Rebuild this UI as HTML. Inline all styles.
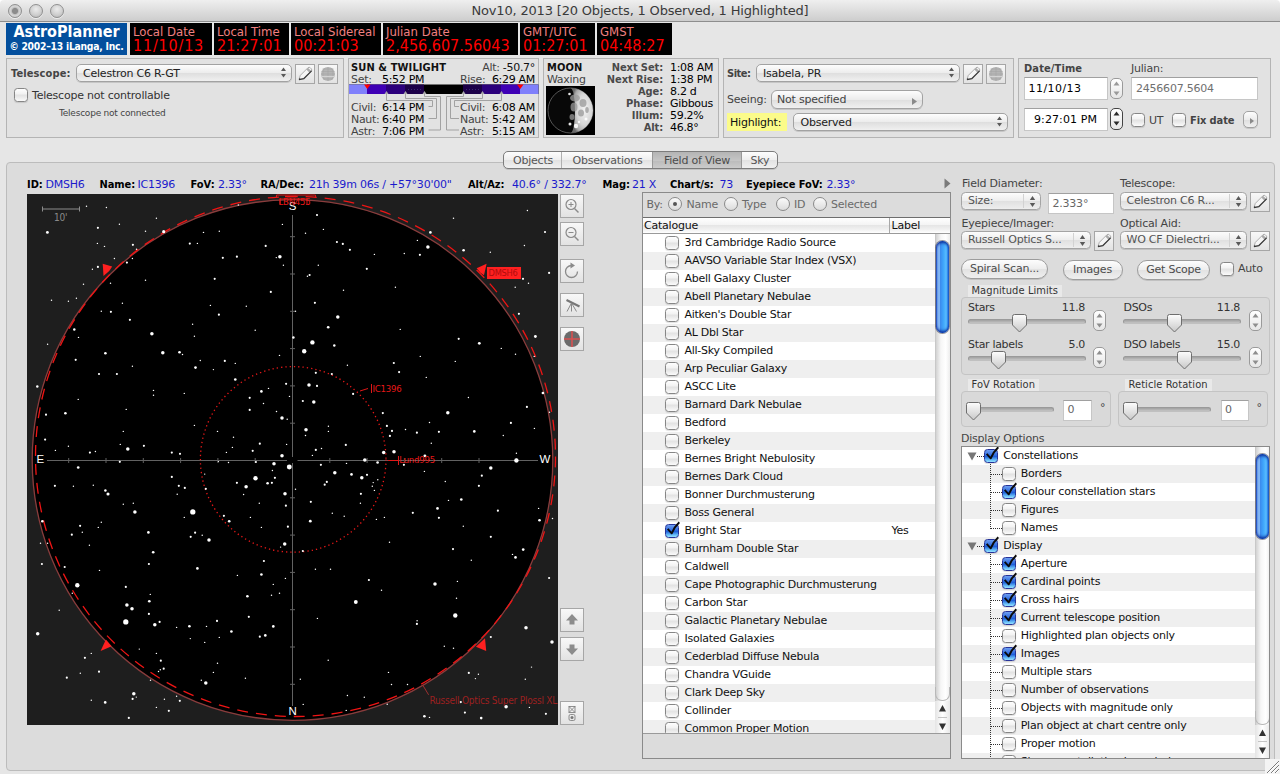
<!DOCTYPE html>
<html><head><meta charset="utf-8"><title>AstroPlanner</title>
<style>
*{box-sizing:border-box;margin:0;padding:0}
html,body{width:1280px;height:774px;overflow:hidden;background:#e6e6e6}
body{font-family:"DejaVu Sans","Liberation Sans",sans-serif;font-size:11px;letter-spacing:-.22px;color:#222;position:relative;-webkit-font-smoothing:antialiased}
.a{position:absolute;white-space:nowrap}
.b{font-family:"DejaVu Sans Condensed","DejaVu Sans","Liberation Sans",sans-serif;font-stretch:condensed;font-weight:bold;letter-spacing:.12px}
.cd{font-family:"DejaVu Sans Condensed","DejaVu Sans","Liberation Sans",sans-serif;font-stretch:condensed;letter-spacing:0}
.r{text-align:right}
.titlebar{left:0;top:0;width:1280px;height:22px;background:linear-gradient(#efefef,#cdcdcd);border-bottom:1px solid #8e8e8e;border-radius:4px 4px 0 0}
.title{left:0;top:3px;width:1280px;text-align:center;font-size:13px;letter-spacing:-.18px;color:#3a3a3a}
.tl{width:14px;height:14px;border-radius:50%;top:4px;background:radial-gradient(circle at 50% 35%,#ececec,#d0d0d0 55%,#b4b4b4);border:1px solid #909090;box-shadow:0 1px 0 rgba(255,255,255,.6)}
.blk{top:23px;height:32px;background:#000}
.blk .l{left:3px;top:1px;font-size:13px;color:#f08080;line-height:15px}
.blk .v{left:3px;top:13px;font-size:16px;color:#f00;line-height:19px}
.grp{border:1px solid #b4b4b4;background:#e2e2e2}
.lbl{color:#444}
.pop{height:18px;border:1px solid #a2a2a2;border-radius:5px;background:linear-gradient(#fdfdfd,#ececec 50%,#dedede 51%,#f0f0f0);box-shadow:0 1px 0 rgba(0,0,0,.12);font-size:11px;line-height:17px;padding-left:6px;color:#222}
.pop.d:after{content:"";position:absolute;right:15px;top:1px;bottom:1px;border-left:1px solid #dcdcdc}
.arr{right:4px;top:2px;width:7px;height:11px}
.sqb{width:19px;height:19px;border:1px solid #a6a6a6;background:linear-gradient(#f8f8f8,#e2e2e2)}
.chk{width:13px;height:13px;border:1px solid #868686;border-radius:3.500px;background:linear-gradient(#fefefe,#f2f2f2 42%,#e2e2e2 50%,#ececec 72%,#fbfbfb);box-shadow:0 1px 1px rgba(0,0,0,.12)}
.chk.on{background:linear-gradient(#9cc6f4,#3f83dc 50%,#2a6fd0 51%,#6fb0f2);border-color:#3a5f9e}
.fld{background:#fff;border:1px solid #c6c6c6;border-top-color:#a0a0a0;font-size:11px;line-height:16px;padding-left:5px}
.stp{width:11px;height:21px;border:1px solid #9a9a9a;border-radius:5px;background:linear-gradient(#fff,#e6e6e6)}
</style></head><body>
<div class="a" style="left:0;top:0;width:1280px;height:6px;background:#fff"></div><div class="a titlebar"></div>
<div class="a tl" style="left:8px;background:radial-gradient(circle at 50% 50%,#8c8c8c 0,#8c8c8c 2.600px,#c4c4c4 3.600px,#d8d8d8 5px,#b0b0b0)"></div><div class="a tl" style="left:29px"></div><div class="a tl" style="left:50px"></div>
<div class="a title">Nov10, 2013 [20 Objects, 1 Observed, 1 Highlighted]</div>
<div class="a" style="left:6px;top:23px;width:121px;height:32px;background:#034f9d;color:#fff;text-align:center">
 <div class="a b" style="left:0;width:121px;top:0px;font-size:16px;line-height:18px;letter-spacing:0">AstroPlanner</div>
 <div class="a b" style="left:0;width:121px;top:17px;font-size:10.300px;letter-spacing:-.25px;line-height:13px">© 2002–13 iLanga, Inc.</div>
</div>
<div class="a blk cd" style="left:130px;width:82px"><div class="a l">Local Date</div><div class="a v" style="letter-spacing:.8px">11/10/13</div></div>
<div class="a blk cd" style="left:214px;width:75px"><div class="a l">Local Time</div><div class="a v">21:27:01</div></div>
<div class="a blk cd" style="left:291px;width:90px"><div class="a l">Local Sidereal</div><div class="a v">00:21:03</div></div>
<div class="a blk cd" style="left:383px;width:135px"><div class="a l">Julian Date</div><div class="a v">2,456,607.56043</div></div>
<div class="a blk cd" style="left:520px;width:75px"><div class="a l">GMT/UTC</div><div class="a v">01:27:01</div></div>
<div class="a blk cd" style="left:597px;width:75px"><div class="a l">GMST</div><div class="a v">04:48:27</div></div>
<!-- telescope panel -->
<div class="a grp" style="left:6px;top:58px;width:338px;height:80px"></div>
<div class="a b lbl" style="left:11px;top:67px;font-size:11px;line-height:14px">Telescope:</div>
<div class="a pop" style="left:76px;top:64px;width:216px">Celestron C6 R-GT<svg class="a arr" viewBox="0 0 7 11"><path d="M3.5 0.5L6 4H1zM3.5 10.5L6 7H1z" fill="#5a5a5a"/></svg></div>
<div class="a sqb" style="left:295px;top:64px;width:20px;height:20px"><svg class="a" style="left:-1px;top:-1px" width="20" height="20" viewBox="0 0 20 20"><path d="M4 15.600L5.300 11.400L12.900 3.800a1.700 1.700 0 0 1 2.400 0l1 1a1.700 1.700 0 0 1 0 2.400L8.700 14.700z" fill="#f6f6f6" stroke="#9c9c9c" stroke-width=".8"/><path d="M11.300 5.400l3.300 3.300 1.700-1.700-3.300-3.300z" fill="#ababab"/><path d="M4 15.600L8.700 14.700L16.600 6.900" stroke="#3c3c3c" stroke-width="1.300" fill="none" stroke-linejoin="round"/><path d="M4 15.600l1.700-.300-1.200-1.300z" fill="#333"/></svg></div>
<div class="a sqb" style="left:318px;top:64px;width:20px;height:20px"><svg class="a" style="left:-1px;top:-1px" width="20" height="20" viewBox="0 0 20 20"><circle cx="10" cy="10" r="7" fill="#b6b6b6"/><path d="M3.500 7.500h13M3 10h14M4.500 5h11M5 15h10M10 3v14M6.500 4c-2 4-2 8 0 12M13.500 4c2 4 2 8 0 12" stroke="#a6a6a6" stroke-width=".6" fill="none"/><path d="M3.600 12.600h12.800" stroke="#d8d8d8" stroke-width="1"/></svg></div>
<div class="a chk" style="left:14px;top:88px;width:14px;height:14px"></div>
<div class="a" style="left:32px;top:87.700px;font-size:11px;line-height:15px;color:#333">Telescope not controllable</div>
<div class="a" style="left:59px;top:106.500px;font-size:9px;line-height:12px;color:#444">Telescope not connected</div>
<!-- sun panel -->
<div class="a grp" style="left:348px;top:58px;width:191px;height:80px"></div>
<div class="a b" style="left:351px;top:61px;font-size:11px;line-height:13px;color:#111">SUN &amp; TWILIGHT</div>
<div class="a r" style="left:435px;width:100px;top:61px;font-size:11px;letter-spacing:-.3px;line-height:14px;color:#111"><span class="lbl">Alt:</span> -50.7°</div>
<div class="a lbl" style="left:351px;top:73px;font-size:11px;letter-spacing:-.3px;line-height:14px">Set:</div>
<div class="a" style="left:382px;top:73px;font-size:11px;letter-spacing:-.3px;line-height:14px;color:#000">5:52 PM</div>
<div class="a lbl" style="left:460px;top:73px;font-size:11px;letter-spacing:-.3px;line-height:14px">Rise:</div>
<div class="a r" style="left:435px;width:100px;top:73px;font-size:11px;letter-spacing:-.3px;line-height:14px;color:#000">6:29 AM</div>
<svg class="a" style="left:348px;top:84px" width="191" height="52" viewBox="348 84 191 52">
<rect x="349" y="84.5" width="189.5" height="9.5" fill="#000"/>
<rect x="349" y="84.5" width="18" height="9.5" fill="#8080fb"/><rect x="520" y="84.5" width="18.5" height="9.5" fill="#8080fb"/>
<rect x="367" y="84.5" width="19" height="9.5" fill="#3f00b5"/><rect x="501" y="84.5" width="19" height="9.5" fill="#3f00b5"/>
<rect x="386" y="84.5" width="19" height="9.5" fill="#2c007c"/><rect x="482" y="84.5" width="19" height="9.5" fill="#2c007c"/>
<rect x="405" y="84.5" width="19" height="9.5" fill="#1c0048"/><rect x="463" y="84.5" width="19" height="9.5" fill="#1c0048"/>
<path d="M408 89.500h13M466 89.500h13" stroke="#3a2a70" stroke-width="1" stroke-dasharray="1 2" fill="none"/><path d="M364 84.5h6.500l-3.250 4.500zM517 84.5h6.500l-3.250 4.500z" fill="#f00"/>
<g fill="none" stroke="#a2a2a2" stroke-width="1">
<path d="M386.5 94v6.5h46v6h-4M405.5 94v4.500h31v20h-8M424.500 94v2.500h16v33.500h-12"/>
<path d="M501.500 94v6.500h-47v6h4.500M482.500 94v4.500h-32v20h8.500M463.500 94v2.500h-17v33.500h12.500"/>
</g>
<path d="M384.500 94l2-3 2 3zM403.500 94l2-3 2 3zM422.500 94l2-3 2 3zM461.500 94l2-3 2 3zM480.500 94l2-3 2 3zM499.500 94l2-3 2 3z" fill="#a8a8a8"/>
</svg>
<div class="a lbl" style="left:351px;top:101px;font-size:11px;letter-spacing:-.3px;line-height:14px">Civil:</div><div class="a" style="left:382px;top:101px;font-size:11px;letter-spacing:-.3px;line-height:14px;color:#000">6:14 PM</div>
<div class="a lbl" style="left:351px;top:113px;font-size:11px;letter-spacing:-.3px;line-height:14px">Naut:</div><div class="a" style="left:382px;top:113px;font-size:11px;letter-spacing:-.3px;line-height:14px;color:#000">6:40 PM</div>
<div class="a lbl" style="left:351px;top:125px;font-size:11px;letter-spacing:-.3px;line-height:14px">Astr:</div><div class="a" style="left:382px;top:125px;font-size:11px;letter-spacing:-.3px;line-height:14px;color:#000">7:06 PM</div>
<div class="a lbl" style="left:460px;top:101px;font-size:11px;letter-spacing:-.3px;line-height:14px">Civil:</div><div class="a r" style="left:435px;width:100px;top:101px;font-size:11px;letter-spacing:-.3px;line-height:14px;color:#000">6:08 AM</div>
<div class="a lbl" style="left:460px;top:113px;font-size:11px;letter-spacing:-.3px;line-height:14px">Naut:</div><div class="a r" style="left:435px;width:100px;top:113px;font-size:11px;letter-spacing:-.3px;line-height:14px;color:#000">5:42 AM</div>
<div class="a lbl" style="left:460px;top:125px;font-size:11px;letter-spacing:-.3px;line-height:14px">Astr:</div><div class="a r" style="left:435px;width:100px;top:125px;font-size:11px;letter-spacing:-.3px;line-height:14px;color:#000">5:15 AM</div>
<!-- moon panel -->
<div class="a grp" style="left:543px;top:58px;width:176px;height:80px"></div>
<div class="a b" style="left:547px;top:61px;font-size:11px;line-height:13px;color:#111">MOON</div>
<div class="a lbl" style="left:547px;top:73px;font-size:11px;letter-spacing:-.3px;line-height:14px">Waxing</div>
<svg class="a" style="left:546px;top:86px" width="49" height="49" viewBox="0 0 49 49">
<defs><radialGradient id="mg" cx="62%" cy="48%" r="62%"><stop offset="0" stop-color="#f2f2f2"/><stop offset=".55" stop-color="#d6d6d6"/><stop offset=".85" stop-color="#a8a8a8"/><stop offset="1" stop-color="#6a6a6a"/></radialGradient></defs>
<rect width="49" height="49" fill="#000"/>
<circle cx="24.500" cy="24.500" r="22.500" fill="#080808" stroke="#555" stroke-width="1"/>
<path d="M24.500 2A22.500 22.500 0 0 1 24.500 47A4.500 22.500 0 0 0 24.500 2z" fill="url(#mg)"/>
<g fill="#9a9a9a" opacity=".75"><ellipse cx="29" cy="12" rx="5" ry="3.500"/><ellipse cx="37" cy="17" rx="3.500" ry="4"/><ellipse cx="28" cy="21" rx="3.500" ry="4.500"/><ellipse cx="35" cy="27" rx="3" ry="3.500"/><ellipse cx="26" cy="31" rx="2.500" ry="3"/><ellipse cx="41" cy="24" rx="1.800" ry="3"/></g>
<g fill="#fff" opacity=".9"><circle cx="30" cy="40" r="2.200"/><circle cx="40" cy="33" r="1.500"/><circle cx="24" cy="38" r="1.500"/><circle cx="33" cy="36" r="1.200"/><circle cx="23.500" cy="8" r="1.300"/></g>
</svg>
<div class="a b r" style="left:583px;width:80px;top:61px;font-size:11px;letter-spacing:-.1px;line-height:14px;color:#4a4a4a">Next Set:</div><div class="a" style="left:670px;top:61px;font-size:11px;letter-spacing:-.3px;line-height:14px;color:#000">1:08 AM</div>
<div class="a b r" style="left:583px;width:80px;top:73px;font-size:11px;letter-spacing:-.1px;line-height:14px;color:#4a4a4a">Next Rise:</div><div class="a" style="left:670px;top:73px;font-size:11px;letter-spacing:-.3px;line-height:14px;color:#000">1:38 PM</div>
<div class="a b r" style="left:583px;width:80px;top:85px;font-size:11px;letter-spacing:-.1px;line-height:14px;color:#4a4a4a">Age:</div><div class="a" style="left:670px;top:85px;font-size:11px;letter-spacing:-.3px;line-height:14px;color:#000">8.2 d</div>
<div class="a b r" style="left:583px;width:80px;top:97px;font-size:11px;letter-spacing:-.1px;line-height:14px;color:#4a4a4a">Phase:</div><div class="a" style="left:670px;top:97px;font-size:11px;letter-spacing:-.3px;line-height:14px;color:#000">Gibbous</div>
<div class="a b r" style="left:583px;width:80px;top:109px;font-size:11px;letter-spacing:-.1px;line-height:14px;color:#4a4a4a">Illum:</div><div class="a" style="left:670px;top:109px;font-size:11px;letter-spacing:-.3px;line-height:14px;color:#000">59.2%</div>
<div class="a b r" style="left:583px;width:80px;top:121px;font-size:11px;letter-spacing:-.1px;line-height:14px;color:#4a4a4a">Alt:</div><div class="a" style="left:670px;top:121px;font-size:11px;letter-spacing:-.3px;line-height:14px;color:#000">46.8°</div>
<!-- site panel -->
<div class="a grp" style="left:723px;top:58px;width:291px;height:80px"></div>
<div class="a b lbl" style="left:727px;top:67px;font-size:11px;letter-spacing:-.5px;line-height:14px">Site:</div>
<div class="a pop" style="left:756px;top:64px;width:204px">Isabela, PR<svg class="a arr" viewBox="0 0 7 11"><path d="M3.5 0.5L6 4H1zM3.5 10.5L6 7H1z" fill="#5a5a5a"/></svg></div>
<div class="a sqb" style="left:963px;top:64px;width:20px;height:20px"><svg class="a" style="left:-1px;top:-1px" width="20" height="20" viewBox="0 0 20 20"><path d="M4 15.600L5.300 11.400L12.900 3.800a1.700 1.700 0 0 1 2.400 0l1 1a1.700 1.700 0 0 1 0 2.400L8.700 14.700z" fill="#f6f6f6" stroke="#9c9c9c" stroke-width=".8"/><path d="M11.300 5.400l3.300 3.300 1.700-1.700-3.300-3.300z" fill="#ababab"/><path d="M4 15.600L8.700 14.700L16.600 6.900" stroke="#3c3c3c" stroke-width="1.300" fill="none" stroke-linejoin="round"/><path d="M4 15.600l1.700-.300-1.200-1.300z" fill="#333"/></svg></div>
<div class="a sqb" style="left:986px;top:64px;width:20px;height:20px"><svg class="a" style="left:-1px;top:-1px" width="20" height="20" viewBox="0 0 20 20"><circle cx="10" cy="10" r="7" fill="#b6b6b6"/><path d="M3.500 7.500h13M3 10h14M4.500 5h11M5 15h10M10 3v14M6.500 4c-2 4-2 8 0 12M13.500 4c2 4 2 8 0 12" stroke="#a6a6a6" stroke-width=".6" fill="none"/><path d="M3.600 12.600h12.800" stroke="#d8d8d8" stroke-width="1"/></svg></div>
<div class="a lbl" style="left:727px;top:93px;font-size:11px;line-height:14px">Seeing:</div>
<div class="a pop" style="left:771px;top:90px;width:152px;height:19px;border-radius:6px;color:#444;padding-left:5px">Not specified<svg class="a" style="right:5px;top:7px" width="5" height="7" viewBox="0 0 5 7"><path d="M0 0l5 3.500-5 3.500z" fill="#8a8a8a"/></svg></div>
<div class="a" style="left:727px;top:113px;width:60px;height:18px;background:#fbfb8a;font-size:11px;line-height:20px;padding-left:3px;color:#111">Highlight:</div>
<div class="a pop" style="left:793px;top:113px;width:215px;padding-left:6.500px">Observed<svg class="a arr" viewBox="0 0 7 11"><path d="M3.5 0.5L6 4H1zM3.5 10.5L6 7H1z" fill="#5a5a5a"/></svg></div>
<!-- date/time panel -->
<div class="a grp" style="left:1018px;top:58px;width:253px;height:80px"></div>
<div class="a b lbl" style="left:1024px;top:62px;font-size:11px;line-height:14px">Date/Time</div>
<div class="a lbl" style="left:1131px;top:62px;font-size:11px;line-height:14px">Julian:</div>
<div class="a fld" style="left:1024px;top:77px;width:84px;height:23px;line-height:21px;color:#000;letter-spacing:.45px;padding-left:3.500px">11/10/13</div>
<div class="a stp" style="left:1110px;top:78px;width:13px;height:21px"><svg class="a" style="left:2px;top:2px" width="7" height="15" viewBox="0 0 7 15"><path d="M3.500 .500L6.500 4.500H.500zM3.500 14.500L6.500 10.500H.500z" fill="#9a9a9a"/></svg></div>
<div class="a fld" style="left:1131px;top:77px;width:127px;height:23px;line-height:21px;color:#707070;padding-left:4px">2456607.5604</div>
<div class="a fld" style="left:1024px;top:108px;width:84px;height:23px;line-height:21px;color:#000;padding-left:9px;letter-spacing:.1px">9:27:01 PM</div>
<div class="a stp" style="left:1110px;top:108px;width:13px;height:22px;border:1.500px solid #444"><svg class="a" style="left:1.500px;top:2px" width="7" height="15" viewBox="0 0 7 15"><path d="M3.500 .500L6.500 4.500H.500zM3.500 14.500L6.500 10.500H.500z" fill="#2a2a2a"/></svg></div>
<div class="a chk" style="left:1131px;top:113px;width:14px;height:14px"></div>
<div class="a lbl" style="left:1149px;top:113px;font-size:11px;line-height:15px">UT</div>
<div class="a chk" style="left:1172px;top:113px;width:14px;height:14px"></div>
<div class="a b lbl" style="left:1190px;top:113px;font-size:11px;letter-spacing:-.1px;line-height:15px">Fix date</div>
<div class="a pop" style="left:1243px;top:111px;width:15px;height:17px;border-radius:5px;padding:0"><svg class="a" style="left:6px;top:6px" width="4" height="6" viewBox="0 0 4 6"><path d="M0 0l4 3-4 3z" fill="#8a8a8a"/></svg></div>
<!-- main tab panel -->
<div class="a" style="left:6px;top:161.500px;width:1269px;height:609.500px;border:1px solid #bcbcbc;border-radius:4px;background:#dcdcdc"></div>
<div class="a" style="left:503px;top:151px;width:275px;height:18px;border:1px solid #7c7c7c;border-radius:5px;background:linear-gradient(#fdfdfd,#eee 50%,#e2e2e2 51%,#f0f0f0);box-shadow:0 1px 0 rgba(0,0,0,.12);overflow:hidden;font-size:11px;color:#555">
<div class="a" style="left:149px;top:0;width:88px;height:18px;background:linear-gradient(#b4b4b4,#c6c6c6 50%,#bcbcbc 51%,#cfcfcf)"></div>
<div class="a" style="left:57px;top:0;width:1px;height:18px;background:#b0b0b0"></div>
<div class="a" style="left:148px;top:0;width:1px;height:18px;background:#999"></div>
<div class="a" style="left:237px;top:0;width:1px;height:18px;background:#999"></div>
<div class="a" style="left:0;width:58px;top:1px;text-align:center;line-height:15px">Objects</div>
<div class="a" style="left:58px;width:91px;top:1px;text-align:center;line-height:15px">Observations</div>
<div class="a" style="left:149px;width:88px;top:1px;text-align:center;line-height:15px;color:#4c4c4c">Field of View</div>
<div class="a" style="left:238px;width:36px;top:1px;text-align:center;line-height:15px">Sky</div>
</div>
<div class="a b" style="left:27px;top:178px;font-size:11px;letter-spacing:-.05px;line-height:14px;color:#000">ID:</div><div class="a" style="left:45.5px;top:178px;font-size:11px;line-height:14px;color:#1a1acc">DMSH6</div>
<div class="a b" style="left:99.5px;top:178px;font-size:11px;letter-spacing:-.05px;line-height:14px;color:#000">Name:</div><div class="a" style="left:137.5px;top:178px;font-size:11px;line-height:14px;color:#1a1acc">IC1396</div>
<div class="a b" style="left:190.5px;top:178px;font-size:11px;letter-spacing:-.05px;line-height:14px;color:#000">FoV:</div><div class="a" style="left:218px;top:178px;font-size:11px;line-height:14px;color:#1a1acc">2.33°</div>
<div class="a b" style="left:260.5px;top:178px;font-size:11px;letter-spacing:-.05px;line-height:14px;color:#000">RA/Dec:</div><div class="a" style="left:309px;top:178px;font-size:11px;line-height:14px;color:#1a1acc">21h 39m 06s / +57°30'00"</div>
<div class="a b" style="left:468px;top:178px;font-size:11px;letter-spacing:-.05px;line-height:14px;color:#000">Alt/Az:</div><div class="a" style="left:512px;top:178px;font-size:11px;line-height:14px;color:#1a1acc">40.6° / 332.7°</div>
<div class="a b" style="left:602.5px;top:178px;font-size:11px;letter-spacing:-.05px;line-height:14px;color:#000">Mag:</div><div class="a" style="left:632px;top:178px;font-size:11px;line-height:14px;color:#1a1acc">21 X</div>
<div class="a b" style="left:670px;top:178px;font-size:11px;letter-spacing:-.05px;line-height:14px;color:#000">Chart/s:</div><div class="a" style="left:719.5px;top:178px;font-size:11px;line-height:14px;color:#1a1acc">73</div>
<div class="a b" style="left:746px;top:178px;font-size:11px;letter-spacing:-.05px;line-height:14px;color:#000">Eyepiece FoV:</div><div class="a" style="left:826.5px;top:178px;font-size:11px;line-height:14px;color:#1a1acc">2.33°</div>
<svg class="a" style="left:944px;top:178px" width="7" height="11" viewBox="0 0 7 11"><path d="M0.500 0.500l6 5-6 5z" fill="#7a7a7a"/></svg>
<svg class="a" style="left:27px;top:194px" width="531" height="531" viewBox="27 194 531 531" font-family="'Liberation Sans',sans-serif">
<rect x="27" y="194" width="531" height="531" fill="#1e1e1e"/>
<circle cx="292.500" cy="460" r="260" fill="#000"/>
<g stroke="#626262" stroke-width="1" fill="none"><path d="M292.500 215v242M292.500 463v243M47 460.500h240M297.500 460.500h240.500"/>
<path d="M68.7 458v5M290 236.7h5M106.0 458v5M290 274.0h5M143.3 458v5M290 311.3h5M180.6 458v5M290 348.6h5M217.9 458v5M290 385.9h5M255.2 458v5M290 423.2h5M329.8 458v5M290 497.8h5M367.1 458v5M290 535.1h5M404.4 458v5M290 572.4h5M441.7 458v5M290 609.7h5M479.0 458v5M290 647.0h5M516.3 458v5M290 684.3h5"/></g>
<circle cx="293.200" cy="459.400" r="92.800" fill="none" stroke="#e81818" stroke-width="1.300" stroke-dasharray="1.300 3.030"/>
<circle cx="292.500" cy="460" r="260.300" fill="none" stroke="#8a3c3c" stroke-width="1.300"/>
<circle cx="295.500" cy="456.500" r="260" fill="none" stroke="#f01414" stroke-width="1.300" stroke-dasharray="11 8"/>
<path d="M42.500 206.500v5M79.500 206.500v5M42.500 209h37" stroke="#8c8c8c" stroke-width="1" fill="none"/>
<text x="54" y="221" font-size="10" fill="#8a8a8a" font-family="DejaVu Sans Condensed,DejaVu Sans,sans-serif">10'</text>
<circle cx="86.5" cy="206.3" r="0.72" fill="#fff"/>
<circle cx="106.4" cy="207.5" r="0.72" fill="#fff"/>
<circle cx="156.4" cy="218.2" r="0.72" fill="#fff"/>
<circle cx="97.9" cy="227.8" r="1.08" fill="#fff"/>
<circle cx="119.4" cy="224.2" r="0.72" fill="#fff"/>
<circle cx="47.4" cy="232.4" r="1.41" fill="#fff"/>
<circle cx="145.5" cy="231.3" r="0.72" fill="#fff"/>
<circle cx="163.7" cy="231.7" r="1.58" fill="#fff"/>
<circle cx="97.4" cy="243.4" r="0.72" fill="#fff"/>
<circle cx="104.5" cy="246.4" r="0.72" fill="#fff"/>
<circle cx="132.9" cy="244.8" r="1.08" fill="#fff"/>
<circle cx="136.5" cy="249.3" r="0.72" fill="#fff"/>
<circle cx="189.8" cy="243.6" r="1.08" fill="#fff"/>
<circle cx="197.4" cy="243.4" r="0.72" fill="#fff"/>
<circle cx="114.4" cy="258.5" r="0.72" fill="#fff"/>
<circle cx="132.4" cy="258.5" r="0.72" fill="#fff"/>
<circle cx="126.9" cy="262.6" r="1.08" fill="#fff"/>
<circle cx="97.9" cy="266.9" r="1.08" fill="#fff"/>
<circle cx="92.4" cy="269.2" r="0.72" fill="#fff"/>
<circle cx="83.5" cy="284.3" r="0.72" fill="#fff"/>
<circle cx="110.5" cy="283.2" r="0.72" fill="#fff"/>
<circle cx="145.5" cy="280.2" r="0.72" fill="#fff"/>
<circle cx="51.5" cy="300.3" r="0.72" fill="#fff"/>
<circle cx="68.4" cy="301.2" r="0.72" fill="#fff"/>
<circle cx="76.4" cy="298.3" r="0.72" fill="#fff"/>
<circle cx="122.4" cy="303.3" r="0.72" fill="#fff"/>
<circle cx="101.3" cy="311.3" r="0.72" fill="#fff"/>
<circle cx="110.9" cy="311.8" r="1.08" fill="#fff"/>
<circle cx="129.9" cy="319.8" r="1.08" fill="#fff"/>
<circle cx="192.6" cy="324.3" r="0.72" fill="#fff"/>
<circle cx="74.3" cy="329.4" r="1.23" fill="#fff"/>
<circle cx="78.5" cy="337.4" r="0.72" fill="#fff"/>
<circle cx="151.9" cy="333.7" r="1.76" fill="#fff"/>
<circle cx="194.4" cy="336.2" r="0.72" fill="#fff"/>
<circle cx="47.6" cy="344.2" r="0.72" fill="#fff"/>
<circle cx="105.4" cy="353.2" r="1.32" fill="#fff"/>
<circle cx="162.8" cy="352.7" r="1.76" fill="#fff"/>
<circle cx="179.5" cy="352.2" r="1.32" fill="#fff"/>
<circle cx="182.5" cy="354.5" r="0.72" fill="#fff"/>
<circle cx="75.7" cy="359.8" r="1.08" fill="#fff"/>
<circle cx="132.4" cy="366.2" r="0.72" fill="#fff"/>
<circle cx="195.5" cy="367.6" r="1.32" fill="#fff"/>
<circle cx="200.3" cy="360.5" r="0.72" fill="#fff"/>
<circle cx="203.5" cy="232.4" r="0.72" fill="#fff"/>
<circle cx="317.0" cy="215.0" r="1.08" fill="#fff"/>
<circle cx="282.4" cy="224.4" r="0.72" fill="#fff"/>
<circle cx="219.3" cy="231.3" r="0.72" fill="#fff"/>
<circle cx="323.4" cy="229.4" r="0.72" fill="#fff"/>
<circle cx="305.5" cy="233.3" r="0.72" fill="#fff"/>
<circle cx="265.7" cy="245.9" r="1.08" fill="#fff"/>
<circle cx="336.9" cy="242.0" r="1.08" fill="#fff"/>
<circle cx="342.8" cy="243.9" r="1.08" fill="#fff"/>
<circle cx="349.9" cy="249.8" r="1.08" fill="#fff"/>
<circle cx="374.4" cy="254.4" r="0.72" fill="#fff"/>
<circle cx="222.8" cy="257.8" r="1.08" fill="#fff"/>
<circle cx="236.9" cy="256.7" r="1.08" fill="#fff"/>
<circle cx="279.9" cy="256.7" r="1.76" fill="#fff"/>
<circle cx="276.3" cy="257.6" r="0.72" fill="#fff"/>
<circle cx="283.4" cy="265.3" r="0.72" fill="#fff"/>
<circle cx="318.3" cy="265.3" r="0.72" fill="#fff"/>
<circle cx="366.8" cy="268.8" r="1.08" fill="#fff"/>
<circle cx="309.6" cy="275.0" r="1.08" fill="#fff"/>
<circle cx="307.4" cy="276.3" r="0.72" fill="#fff"/>
<circle cx="214.7" cy="278.8" r="1.08" fill="#fff"/>
<circle cx="270.8" cy="291.9" r="1.08" fill="#fff"/>
<circle cx="343.5" cy="290.3" r="0.72" fill="#fff"/>
<circle cx="210.4" cy="305.4" r="0.72" fill="#fff"/>
<circle cx="246.3" cy="306.3" r="0.72" fill="#fff"/>
<circle cx="314.9" cy="302.8" r="1.08" fill="#fff"/>
<circle cx="295.5" cy="311.3" r="0.72" fill="#fff"/>
<circle cx="218.9" cy="314.7" r="1.08" fill="#fff"/>
<circle cx="337.8" cy="317.0" r="1.76" fill="#fff"/>
<circle cx="328.2" cy="327.3" r="1.32" fill="#fff"/>
<circle cx="255.2" cy="330.3" r="0.72" fill="#fff"/>
<circle cx="293.4" cy="337.4" r="1.23" fill="#fff"/>
<circle cx="312.4" cy="342.4" r="2.2" fill="#fff"/>
<circle cx="334.3" cy="345.4" r="1.23" fill="#fff"/>
<circle cx="304.2" cy="351.3" r="2.2" fill="#fff"/>
<circle cx="279.5" cy="355.4" r="0.72" fill="#fff"/>
<circle cx="224.8" cy="360.9" r="1.08" fill="#fff"/>
<circle cx="235.3" cy="363.4" r="0.72" fill="#fff"/>
<circle cx="213.4" cy="369.6" r="0.72" fill="#fff"/>
<circle cx="347.4" cy="365.3" r="0.72" fill="#fff"/>
<circle cx="238.3" cy="205.0" r="0.72" fill="#fff"/>
<circle cx="527.4" cy="210.5" r="0.72" fill="#fff"/>
<circle cx="453.5" cy="218.2" r="0.72" fill="#fff"/>
<circle cx="545.0" cy="232.0" r="1.08" fill="#fff"/>
<circle cx="430.4" cy="232.4" r="1.32" fill="#fff"/>
<circle cx="417.4" cy="240.4" r="0.72" fill="#fff"/>
<circle cx="427.9" cy="247.1" r="1.76" fill="#fff"/>
<circle cx="524.4" cy="245.5" r="0.72" fill="#fff"/>
<circle cx="463.6" cy="250.3" r="1.32" fill="#fff"/>
<circle cx="490.3" cy="252.3" r="0.72" fill="#fff"/>
<circle cx="404.3" cy="253.5" r="0.72" fill="#fff"/>
<circle cx="419.9" cy="254.8" r="1.08" fill="#fff"/>
<circle cx="549.1" cy="272.9" r="1.08" fill="#fff"/>
<circle cx="523.0" cy="278.8" r="1.08" fill="#fff"/>
<circle cx="528.5" cy="283.2" r="0.72" fill="#fff"/>
<circle cx="515.2" cy="287.3" r="0.72" fill="#fff"/>
<circle cx="395.4" cy="287.3" r="0.72" fill="#fff"/>
<circle cx="518.9" cy="313.8" r="1.08" fill="#fff"/>
<circle cx="400.2" cy="329.4" r="0.72" fill="#fff"/>
<circle cx="535.4" cy="336.5" r="1.41" fill="#fff"/>
<circle cx="458.7" cy="338.8" r="1.08" fill="#fff"/>
<circle cx="479.3" cy="343.3" r="1.41" fill="#fff"/>
<circle cx="501.3" cy="348.4" r="0.72" fill="#fff"/>
<circle cx="515.5" cy="354.3" r="0.72" fill="#fff"/>
<circle cx="420.3" cy="356.4" r="0.72" fill="#fff"/>
<circle cx="534.2" cy="356.4" r="0.72" fill="#fff"/>
<circle cx="455.3" cy="361.4" r="0.72" fill="#fff"/>
<circle cx="393.8" cy="363.0" r="1.08" fill="#fff"/>
<circle cx="99.0" cy="374.0" r="1.08" fill="#fff"/>
<circle cx="116.9" cy="374.0" r="1.08" fill="#fff"/>
<circle cx="37.3" cy="386.5" r="1.23" fill="#fff"/>
<circle cx="153.5" cy="390.4" r="0.72" fill="#fff"/>
<circle cx="153.5" cy="395.2" r="0.72" fill="#fff"/>
<circle cx="184.3" cy="393.4" r="0.72" fill="#fff"/>
<circle cx="78.2" cy="399.4" r="0.72" fill="#fff"/>
<circle cx="126.2" cy="409.4" r="0.72" fill="#fff"/>
<circle cx="65.4" cy="413.3" r="1.32" fill="#fff"/>
<circle cx="46.0" cy="414.7" r="1.08" fill="#fff"/>
<circle cx="194.4" cy="425.4" r="0.72" fill="#fff"/>
<circle cx="123.3" cy="431.4" r="0.72" fill="#fff"/>
<circle cx="45.1" cy="439.6" r="1.08" fill="#fff"/>
<circle cx="68.4" cy="446.2" r="0.72" fill="#fff"/>
<circle cx="120.3" cy="444.4" r="0.72" fill="#fff"/>
<circle cx="143.9" cy="445.8" r="1.08" fill="#fff"/>
<circle cx="127.8" cy="449.0" r="1.76" fill="#fff"/>
<circle cx="55.4" cy="450.4" r="0.72" fill="#fff"/>
<circle cx="89.9" cy="452.6" r="1.08" fill="#fff"/>
<circle cx="95.4" cy="451.5" r="0.72" fill="#fff"/>
<circle cx="171.8" cy="452.6" r="1.08" fill="#fff"/>
<circle cx="180.0" cy="453.8" r="1.08" fill="#fff"/>
<circle cx="119.8" cy="461.8" r="1.08" fill="#fff"/>
<circle cx="78.2" cy="467.5" r="1.32" fill="#fff"/>
<circle cx="171.8" cy="476.9" r="1.08" fill="#fff"/>
<circle cx="54.9" cy="485.8" r="1.08" fill="#fff"/>
<circle cx="73.4" cy="486.3" r="0.72" fill="#fff"/>
<circle cx="93.3" cy="485.3" r="0.72" fill="#fff"/>
<circle cx="178.8" cy="485.8" r="1.08" fill="#fff"/>
<circle cx="184.8" cy="487.9" r="1.08" fill="#fff"/>
<circle cx="105.4" cy="490.4" r="1.23" fill="#fff"/>
<circle cx="108.0" cy="494.0" r="1.58" fill="#fff"/>
<circle cx="177.2" cy="494.3" r="0.72" fill="#fff"/>
<circle cx="123.3" cy="504.3" r="0.72" fill="#fff"/>
<circle cx="133.3" cy="503.2" r="0.72" fill="#fff"/>
<circle cx="134.9" cy="511.9" r="1.76" fill="#fff"/>
<circle cx="192.8" cy="511.9" r="2.64" fill="#fff"/>
<circle cx="184.3" cy="517.4" r="0.72" fill="#fff"/>
<circle cx="42.3" cy="521.2" r="1.23" fill="#fff"/>
<circle cx="101.3" cy="522.2" r="0.72" fill="#fff"/>
<circle cx="80.1" cy="525.8" r="1.08" fill="#fff"/>
<circle cx="98.3" cy="527.4" r="0.72" fill="#fff"/>
<circle cx="82.3" cy="532.2" r="0.72" fill="#fff"/>
<circle cx="148.4" cy="532.4" r="1.32" fill="#fff"/>
<circle cx="71.8" cy="534.7" r="1.08" fill="#fff"/>
<circle cx="195.1" cy="532.7" r="1.08" fill="#fff"/>
<circle cx="190.7" cy="536.8" r="1.08" fill="#fff"/>
<circle cx="40.5" cy="543.2" r="0.72" fill="#fff"/>
<circle cx="47.6" cy="543.2" r="0.72" fill="#fff"/>
<circle cx="89.4" cy="545.3" r="0.72" fill="#fff"/>
<circle cx="202.2" cy="535.2" r="0.72" fill="#fff"/>
<circle cx="315.8" cy="372.8" r="1.08" fill="#fff"/>
<circle cx="331.8" cy="374.0" r="1.08" fill="#fff"/>
<circle cx="235.3" cy="379.5" r="1.32" fill="#fff"/>
<circle cx="286.1" cy="383.8" r="1.08" fill="#fff"/>
<circle cx="309.0" cy="384.9" r="1.76" fill="#fff"/>
<circle cx="317.0" cy="385.9" r="1.08" fill="#fff"/>
<circle cx="268.5" cy="388.4" r="0.72" fill="#fff"/>
<circle cx="261.4" cy="391.4" r="1.32" fill="#fff"/>
<circle cx="353.1" cy="393.9" r="1.08" fill="#fff"/>
<circle cx="249.7" cy="397.8" r="1.08" fill="#fff"/>
<circle cx="289.5" cy="396.4" r="0.72" fill="#fff"/>
<circle cx="302.8" cy="401.0" r="1.08" fill="#fff"/>
<circle cx="313.8" cy="401.9" r="1.76" fill="#fff"/>
<circle cx="263.5" cy="403.5" r="0.72" fill="#fff"/>
<circle cx="249.7" cy="409.9" r="1.08" fill="#fff"/>
<circle cx="276.5" cy="411.5" r="0.72" fill="#fff"/>
<circle cx="282.0" cy="417.9" r="1.76" fill="#fff"/>
<circle cx="287.2" cy="419.3" r="0.72" fill="#fff"/>
<circle cx="328.4" cy="426.3" r="0.72" fill="#fff"/>
<circle cx="217.5" cy="431.4" r="0.72" fill="#fff"/>
<circle cx="306.0" cy="429.8" r="1.76" fill="#fff"/>
<circle cx="328.4" cy="431.4" r="0.72" fill="#fff"/>
<circle cx="305.5" cy="435.5" r="0.72" fill="#fff"/>
<circle cx="233.5" cy="437.3" r="0.72" fill="#fff"/>
<circle cx="259.8" cy="443.7" r="1.08" fill="#fff"/>
<circle cx="286.6" cy="444.4" r="0.72" fill="#fff"/>
<circle cx="345.8" cy="444.9" r="1.08" fill="#fff"/>
<circle cx="232.4" cy="447.4" r="0.72" fill="#fff"/>
<circle cx="315.8" cy="449.9" r="1.08" fill="#fff"/>
<circle cx="321.5" cy="448.5" r="0.72" fill="#fff"/>
<circle cx="252.7" cy="450.8" r="1.08" fill="#fff"/>
<circle cx="226.4" cy="452.4" r="0.72" fill="#fff"/>
<circle cx="282.0" cy="455.8" r="1.76" fill="#fff"/>
<circle cx="312.4" cy="455.4" r="0.72" fill="#fff"/>
<circle cx="364.8" cy="460.0" r="1.76" fill="#fff"/>
<circle cx="377.6" cy="462.5" r="1.32" fill="#fff"/>
<circle cx="218.4" cy="461.6" r="0.72" fill="#fff"/>
<circle cx="228.5" cy="462.5" r="0.72" fill="#fff"/>
<circle cx="255.9" cy="462.0" r="1.08" fill="#fff"/>
<circle cx="274.0" cy="463.8" r="1.76" fill="#fff"/>
<circle cx="289.3" cy="467.0" r="2.46" fill="#fff"/>
<circle cx="320.9" cy="464.8" r="1.08" fill="#fff"/>
<circle cx="346.5" cy="463.4" r="0.72" fill="#fff"/>
<circle cx="272.4" cy="470.5" r="0.72" fill="#fff"/>
<circle cx="334.8" cy="472.8" r="1.76" fill="#fff"/>
<circle cx="351.5" cy="474.4" r="1.32" fill="#fff"/>
<circle cx="367.0" cy="474.8" r="1.08" fill="#fff"/>
<circle cx="361.8" cy="477.8" r="1.76" fill="#fff"/>
<circle cx="377.8" cy="479.8" r="0.72" fill="#fff"/>
<circle cx="255.5" cy="478.2" r="2.2" fill="#fff"/>
<circle cx="274.9" cy="477.8" r="1.08" fill="#fff"/>
<circle cx="204.7" cy="474.1" r="0.72" fill="#fff"/>
<circle cx="236.9" cy="482.8" r="1.08" fill="#fff"/>
<circle cx="267.6" cy="483.3" r="1.32" fill="#fff"/>
<circle cx="271.9" cy="482.8" r="1.08" fill="#fff"/>
<circle cx="326.8" cy="481.9" r="1.08" fill="#fff"/>
<circle cx="324.7" cy="484.7" r="1.08" fill="#fff"/>
<circle cx="373.2" cy="482.6" r="0.72" fill="#fff"/>
<circle cx="246.1" cy="486.7" r="1.76" fill="#fff"/>
<circle cx="372.3" cy="486.3" r="0.72" fill="#fff"/>
<circle cx="205.8" cy="488.8" r="1.08" fill="#fff"/>
<circle cx="295.5" cy="489.2" r="0.72" fill="#fff"/>
<circle cx="374.4" cy="490.4" r="0.72" fill="#fff"/>
<circle cx="285.0" cy="493.8" r="1.76" fill="#fff"/>
<circle cx="243.6" cy="494.5" r="0.72" fill="#fff"/>
<circle cx="360.9" cy="493.8" r="1.08" fill="#fff"/>
<circle cx="310.8" cy="501.8" r="1.08" fill="#fff"/>
<circle cx="259.3" cy="503.2" r="0.72" fill="#fff"/>
<circle cx="360.4" cy="503.2" r="0.72" fill="#fff"/>
<circle cx="285.9" cy="505.7" r="1.08" fill="#fff"/>
<circle cx="332.3" cy="513.2" r="0.72" fill="#fff"/>
<circle cx="344.2" cy="516.2" r="0.72" fill="#fff"/>
<circle cx="223.9" cy="515.8" r="1.08" fill="#fff"/>
<circle cx="250.4" cy="517.4" r="0.72" fill="#fff"/>
<circle cx="229.2" cy="521.2" r="1.32" fill="#fff"/>
<circle cx="310.3" cy="521.2" r="1.41" fill="#fff"/>
<circle cx="376.4" cy="519.4" r="0.72" fill="#fff"/>
<circle cx="287.9" cy="526.7" r="1.08" fill="#fff"/>
<circle cx="261.4" cy="527.4" r="0.72" fill="#fff"/>
<circle cx="209.0" cy="540.0" r="1.76" fill="#fff"/>
<circle cx="284.7" cy="543.9" r="1.76" fill="#fff"/>
<circle cx="280.6" cy="547.1" r="0.72" fill="#fff"/>
<circle cx="399.1" cy="372.1" r="1.08" fill="#fff"/>
<circle cx="426.3" cy="377.4" r="0.72" fill="#fff"/>
<circle cx="542.9" cy="393.0" r="1.32" fill="#fff"/>
<circle cx="468.4" cy="397.5" r="0.72" fill="#fff"/>
<circle cx="526.9" cy="406.9" r="1.08" fill="#fff"/>
<circle cx="447.8" cy="412.8" r="1.76" fill="#fff"/>
<circle cx="382.8" cy="413.1" r="1.08" fill="#fff"/>
<circle cx="549.5" cy="412.2" r="0.72" fill="#fff"/>
<circle cx="429.5" cy="422.5" r="0.72" fill="#fff"/>
<circle cx="510.9" cy="422.9" r="1.08" fill="#fff"/>
<circle cx="386.9" cy="425.9" r="1.08" fill="#fff"/>
<circle cx="534.4" cy="428.4" r="0.72" fill="#fff"/>
<circle cx="405.5" cy="429.5" r="0.72" fill="#fff"/>
<circle cx="392.0" cy="430.9" r="1.08" fill="#fff"/>
<circle cx="416.9" cy="432.7" r="1.08" fill="#fff"/>
<circle cx="438.9" cy="431.8" r="1.08" fill="#fff"/>
<circle cx="474.3" cy="431.4" r="1.32" fill="#fff"/>
<circle cx="389.9" cy="435.9" r="1.08" fill="#fff"/>
<circle cx="503.3" cy="435.5" r="0.72" fill="#fff"/>
<circle cx="431.3" cy="443.3" r="0.72" fill="#fff"/>
<circle cx="383.7" cy="452.6" r="1.76" fill="#fff"/>
<circle cx="394.0" cy="451.7" r="1.76" fill="#fff"/>
<circle cx="516.4" cy="453.3" r="0.72" fill="#fff"/>
<circle cx="424.9" cy="455.8" r="1.41" fill="#fff"/>
<circle cx="516.4" cy="460.4" r="2.2" fill="#fff"/>
<circle cx="403.9" cy="464.8" r="1.08" fill="#fff"/>
<circle cx="490.8" cy="468.0" r="1.76" fill="#fff"/>
<circle cx="424.4" cy="471.4" r="0.72" fill="#fff"/>
<circle cx="481.8" cy="475.7" r="1.08" fill="#fff"/>
<circle cx="445.3" cy="481.5" r="0.72" fill="#fff"/>
<circle cx="478.9" cy="485.8" r="1.08" fill="#fff"/>
<circle cx="461.3" cy="499.5" r="1.32" fill="#fff"/>
<circle cx="448.5" cy="500.4" r="0.72" fill="#fff"/>
<circle cx="437.5" cy="508.4" r="1.32" fill="#fff"/>
<circle cx="497.9" cy="510.7" r="1.08" fill="#fff"/>
<circle cx="538.6" cy="508.4" r="0.72" fill="#fff"/>
<circle cx="412.8" cy="512.8" r="1.08" fill="#fff"/>
<circle cx="384.4" cy="517.4" r="0.72" fill="#fff"/>
<circle cx="438.9" cy="517.8" r="1.08" fill="#fff"/>
<circle cx="539.5" cy="520.3" r="1.32" fill="#fff"/>
<circle cx="552.5" cy="518.5" r="0.72" fill="#fff"/>
<circle cx="463.3" cy="526.3" r="0.72" fill="#fff"/>
<circle cx="490.8" cy="536.8" r="1.08" fill="#fff"/>
<circle cx="389.5" cy="542.3" r="0.72" fill="#fff"/>
<circle cx="153.2" cy="552.3" r="1.32" fill="#fff"/>
<circle cx="41.9" cy="564.0" r="1.08" fill="#fff"/>
<circle cx="148.9" cy="564.0" r="1.08" fill="#fff"/>
<circle cx="64.7" cy="567.0" r="1.08" fill="#fff"/>
<circle cx="197.4" cy="568.4" r="1.32" fill="#fff"/>
<circle cx="99.5" cy="570.4" r="0.72" fill="#fff"/>
<circle cx="77.3" cy="585.3" r="2.2" fill="#fff"/>
<circle cx="125.8" cy="586.9" r="1.08" fill="#fff"/>
<circle cx="72.3" cy="593.3" r="0.72" fill="#fff"/>
<circle cx="150.3" cy="594.4" r="0.72" fill="#fff"/>
<circle cx="149.3" cy="601.3" r="1.32" fill="#fff"/>
<circle cx="126.9" cy="604.9" r="1.76" fill="#fff"/>
<circle cx="132.0" cy="608.8" r="1.76" fill="#fff"/>
<circle cx="59.2" cy="610.2" r="0.72" fill="#fff"/>
<circle cx="148.9" cy="613.9" r="1.08" fill="#fff"/>
<circle cx="125.8" cy="621.9" r="2.64" fill="#fff"/>
<circle cx="159.6" cy="621.9" r="1.08" fill="#fff"/>
<circle cx="154.8" cy="624.8" r="1.76" fill="#fff"/>
<circle cx="189.4" cy="626.2" r="1.32" fill="#fff"/>
<circle cx="176.6" cy="627.4" r="0.72" fill="#fff"/>
<circle cx="37.7" cy="633.8" r="1.76" fill="#fff"/>
<circle cx="190.3" cy="638.6" r="0.72" fill="#fff"/>
<circle cx="139.3" cy="649.1" r="0.72" fill="#fff"/>
<circle cx="156.4" cy="653.4" r="0.72" fill="#fff"/>
<circle cx="91.3" cy="653.4" r="0.72" fill="#fff"/>
<circle cx="84.9" cy="657.8" r="1.08" fill="#fff"/>
<circle cx="160.8" cy="660.7" r="1.08" fill="#fff"/>
<circle cx="163.7" cy="668.7" r="1.08" fill="#fff"/>
<circle cx="160.3" cy="669.7" r="0.72" fill="#fff"/>
<circle cx="158.5" cy="671.5" r="0.72" fill="#fff"/>
<circle cx="99.0" cy="671.7" r="1.08" fill="#fff"/>
<circle cx="80.3" cy="673.3" r="0.72" fill="#fff"/>
<circle cx="66.8" cy="677.7" r="1.08" fill="#fff"/>
<circle cx="150.5" cy="680.2" r="0.72" fill="#fff"/>
<circle cx="201.3" cy="680.2" r="0.72" fill="#fff"/>
<circle cx="133.8" cy="693.7" r="1.76" fill="#fff"/>
<circle cx="136.3" cy="697.1" r="0.72" fill="#fff"/>
<circle cx="132.6" cy="698.9" r="1.08" fill="#fff"/>
<circle cx="176.6" cy="696.2" r="0.72" fill="#fff"/>
<circle cx="164.4" cy="699.2" r="0.72" fill="#fff"/>
<circle cx="179.8" cy="700.8" r="1.08" fill="#fff"/>
<circle cx="91.3" cy="700.3" r="0.72" fill="#fff"/>
<circle cx="105.2" cy="702.4" r="1.32" fill="#fff"/>
<circle cx="156.4" cy="707.4" r="0.72" fill="#fff"/>
<circle cx="168.8" cy="710.8" r="1.08" fill="#fff"/>
<circle cx="128.8" cy="717.9" r="1.08" fill="#fff"/>
<circle cx="302.8" cy="551.0" r="1.08" fill="#fff"/>
<circle cx="263.9" cy="561.0" r="1.08" fill="#fff"/>
<circle cx="315.4" cy="569.3" r="0.72" fill="#fff"/>
<circle cx="330.5" cy="569.3" r="0.72" fill="#fff"/>
<circle cx="261.4" cy="574.5" r="1.32" fill="#fff"/>
<circle cx="237.4" cy="575.4" r="0.72" fill="#fff"/>
<circle cx="285.4" cy="578.4" r="0.72" fill="#fff"/>
<circle cx="368.9" cy="580.0" r="1.08" fill="#fff"/>
<circle cx="273.3" cy="584.4" r="0.72" fill="#fff"/>
<circle cx="279.5" cy="593.3" r="0.72" fill="#fff"/>
<circle cx="271.5" cy="595.3" r="0.72" fill="#fff"/>
<circle cx="247.4" cy="596.3" r="1.32" fill="#fff"/>
<circle cx="355.8" cy="602.0" r="1.94" fill="#fff"/>
<circle cx="248.8" cy="616.8" r="1.08" fill="#fff"/>
<circle cx="317.4" cy="618.4" r="0.72" fill="#fff"/>
<circle cx="217.0" cy="620.9" r="1.08" fill="#fff"/>
<circle cx="273.3" cy="626.4" r="1.32" fill="#fff"/>
<circle cx="206.5" cy="626.4" r="0.72" fill="#fff"/>
<circle cx="231.4" cy="631.5" r="1.32" fill="#fff"/>
<circle cx="265.3" cy="635.4" r="1.32" fill="#fff"/>
<circle cx="259.8" cy="636.7" r="1.08" fill="#fff"/>
<circle cx="219.3" cy="637.4" r="0.72" fill="#fff"/>
<circle cx="204.7" cy="642.4" r="0.72" fill="#fff"/>
<circle cx="328.2" cy="660.3" r="0.72" fill="#fff"/>
<circle cx="217.5" cy="663.3" r="0.72" fill="#fff"/>
<circle cx="213.4" cy="672.4" r="0.72" fill="#fff"/>
<circle cx="245.4" cy="678.3" r="0.72" fill="#fff"/>
<circle cx="300.3" cy="679.3" r="0.72" fill="#fff"/>
<circle cx="205.8" cy="682.9" r="1.76" fill="#fff"/>
<circle cx="347.4" cy="695.5" r="0.72" fill="#fff"/>
<circle cx="364.3" cy="697.3" r="0.72" fill="#fff"/>
<circle cx="303.2" cy="704.4" r="0.72" fill="#fff"/>
<circle cx="346.2" cy="710.4" r="0.72" fill="#fff"/>
<circle cx="453.0" cy="549.1" r="1.08" fill="#fff"/>
<circle cx="523.2" cy="549.6" r="1.32" fill="#fff"/>
<circle cx="512.5" cy="554.4" r="0.72" fill="#fff"/>
<circle cx="515.5" cy="557.4" r="1.32" fill="#fff"/>
<circle cx="471.3" cy="560.3" r="0.72" fill="#fff"/>
<circle cx="549.1" cy="578.0" r="1.08" fill="#fff"/>
<circle cx="435.0" cy="583.9" r="1.76" fill="#fff"/>
<circle cx="457.4" cy="581.4" r="0.72" fill="#fff"/>
<circle cx="381.5" cy="590.3" r="0.72" fill="#fff"/>
<circle cx="456.5" cy="598.3" r="0.72" fill="#fff"/>
<circle cx="455.3" cy="615.5" r="2.2" fill="#fff"/>
<circle cx="417.1" cy="620.7" r="0.72" fill="#fff"/>
<circle cx="416.9" cy="623.9" r="1.08" fill="#fff"/>
<circle cx="526.0" cy="627.8" r="1.76" fill="#fff"/>
<circle cx="490.8" cy="637.0" r="1.08" fill="#fff"/>
<circle cx="552.0" cy="642.0" r="1.76" fill="#fff"/>
<circle cx="444.3" cy="646.3" r="0.72" fill="#fff"/>
<circle cx="453.5" cy="648.2" r="0.72" fill="#fff"/>
<circle cx="531.5" cy="667.1" r="0.72" fill="#fff"/>
<circle cx="388.5" cy="672.4" r="0.72" fill="#fff"/>
<circle cx="468.8" cy="672.9" r="1.08" fill="#fff"/>
<circle cx="478.4" cy="674.2" r="0.72" fill="#fff"/>
<circle cx="475.4" cy="678.6" r="0.72" fill="#fff"/>
<circle cx="525.3" cy="679.3" r="0.72" fill="#fff"/>
<circle cx="391.5" cy="684.5" r="0.72" fill="#fff"/>
<circle cx="407.5" cy="684.5" r="0.72" fill="#fff"/>
<circle cx="387.2" cy="704.2" r="0.72" fill="#fff"/>
<circle cx="460.8" cy="702.1" r="1.08" fill="#fff"/>
<circle cx="506.1" cy="706.7" r="1.76" fill="#fff"/>
<circle cx="529.4" cy="707.4" r="0.72" fill="#fff"/>
<circle cx="464.9" cy="712.6" r="1.08" fill="#fff"/>
<circle cx="545.9" cy="713.8" r="1.08" fill="#fff"/>
<circle cx="424.4" cy="716.3" r="1.32" fill="#fff"/>
<circle cx="429.5" cy="717.4" r="0.72" fill="#fff"/>
<circle cx="481.2" cy="718.1" r="1.32" fill="#fff"/>
<text x="292.5" y="210" font-size="11.500" fill="#fff" text-anchor="middle">S</text>
<text x="292.5" y="715" font-size="11.500" fill="#fff" text-anchor="middle">N</text>
<text x="40.3" y="463" font-size="11.500" fill="#fff" text-anchor="middle">E</text>
<text x="544.7" y="463" font-size="11.500" fill="#fff" text-anchor="middle">W</text>
<g fill="#ff2020">
<path d="M102.700 263.800l9.500 2.700-3 4.500-5.700 5z"/>
<path d="M476.600 268.300l10-4.600-2.600 11.500-3.500-2.500z"/>
<path d="M105.900 639.500l5.700 6.800-11 4.700z"/>
<path d="M485 638.300l-9.100 8.500 10.300 4.200z"/>
<rect x="487" y="267" width="34" height="12"/>
</g>
<text x="488.500" y="275.600" font-size="9.200" fill="#b00c0c" font-family="DejaVu Sans Condensed,DejaVu Sans,sans-serif">DMSH6</text>
<path d="M276.500 198v-3h39v3M280 204.500v-5.500h27v5.500" stroke="#e01818" fill="none" stroke-width="1"/><path d="M285 196.500h11" stroke="#f01414" stroke-width="1.500"/>
<text x="278.500" y="205.300" font-size="9.500" fill="#e81818" font-family="DejaVu Sans Condensed,DejaVu Sans,sans-serif">LBN455</text>
<path d="M360 391l8-2.500M371.500 384v9" stroke="#e01818" fill="none"/><text x="372.500" y="392" font-size="9.500" fill="#e81818" font-family="DejaVu Sans Condensed,DejaVu Sans,sans-serif">IC1396</text>
<path d="M388 460.500h10M398.500 456v9" stroke="#e01818" fill="none"/><text x="399.300" y="462.500" font-size="9.500" fill="#e81818" font-family="DejaVu Sans Condensed,DejaVu Sans,sans-serif">Lund995</text>
<path d="M422.800 685.200l5.800 9.600" stroke="#9c3030" fill="none"/><text x="429.500" y="704.200" font-size="10" fill="#9c2020" font-family="DejaVu Sans Condensed,DejaVu Sans,sans-serif">Russell Optics Super Plossl XL</text>
</svg>
<div class="a sqb" style="left:560px;top:194px;width:24px;height:24px"><svg class="a" style="left:0;top:0" width="22" height="22" viewBox="0 0 22 22"><circle cx="10" cy="9.500" r="5" fill="none" stroke="#8a8a8a" stroke-width="1.200"/><path d="M13.500 13.500l4 4" stroke="#8a8a8a" stroke-width="1.500"/><path d="M7.500 9.500h5M10 7v5" stroke="#8a8a8a" stroke-width="1"/></svg></div>
<div class="a sqb" style="left:560px;top:222px;width:24px;height:24px"><svg class="a" style="left:0;top:0" width="22" height="22" viewBox="0 0 22 22"><circle cx="10" cy="9.500" r="5" fill="none" stroke="#8a8a8a" stroke-width="1.200"/><path d="M13.500 13.500l4 4" stroke="#8a8a8a" stroke-width="1.500"/><path d="M7.500 9.500h5" stroke="#8a8a8a" stroke-width="1"/></svg></div>
<div class="a sqb" style="left:560px;top:259px;width:24px;height:24px"><svg class="a" style="left:0;top:0" width="22" height="22" viewBox="0 0 22 22"><path d="M10.500 5.500a6 6 0 1 0 6 6" fill="none" stroke="#8a8a8a" stroke-width="1.300"/><path d="M9.500 2.500l4.500 3-4.500 3z" fill="#8a8a8a"/></svg></div>
<div class="a sqb" style="left:560px;top:293px;width:24px;height:24px"><svg class="a" style="left:0;top:0" width="22" height="22" viewBox="0 0 22 22"><path d="M5.500 6l13 6.500" stroke="#777" stroke-width="2.200"/><path d="M10.500 9l-4.500 8.500M10.500 9v8.500M10.500 9l5 8.500" stroke="#888" stroke-width="1" fill="none"/></svg></div>
<div class="a sqb" style="left:560px;top:327px;width:24px;height:24px"><svg class="a" style="left:0;top:0" width="22" height="22" viewBox="0 0 22 22"><circle cx="11" cy="11" r="8" fill="#6a6a6a"/><path d="M3 11h16M11 3v16" stroke="#d85050" stroke-width="1.600"/></svg></div>
<div class="a sqb" style="left:560px;top:608px;width:24px;height:24px"><svg class="a" style="left:0;top:0" width="22" height="22" viewBox="0 0 22 22"><path d="M11 5l6 6.500h-3.500v4h-5v-4H5z" fill="#8c8c8c"/></svg></div>
<div class="a sqb" style="left:560px;top:637px;width:24px;height:24px"><svg class="a" style="left:0;top:0" width="22" height="22" viewBox="0 0 22 22"><path d="M11 17l6-6.500h-3.500v-4h-5v4H5z" fill="#8c8c8c"/></svg></div>
<div class="a sqb" style="left:560px;top:701px;width:24px;height:24px"><svg class="a" style="left:0;top:0" width="22" height="22" viewBox="0 0 22 22"><rect x="8" y="4.500" width="6" height="6" fill="none" stroke="#777" stroke-width=".8"/><path d="M8 4.500l6 6M14 4.500l-6 6" stroke="#777" stroke-width=".8"/><rect x="8" y="12.500" width="6" height="6" rx="1.500" fill="none" stroke="#777" stroke-width=".8"/><circle cx="11" cy="15.500" r="1.500" fill="#777"/></svg></div>
<style>
.rad{width:14px;height:14px;border-radius:50%;border:1px solid #8a8a8a;background:linear-gradient(#fafafa,#dcdcdc);top:197px}
.row{left:643px;width:292px;height:18px}
.ck{width:14px;height:14px;border:1px solid #868686;border-radius:3.500px;background:linear-gradient(#fefefe,#f2f2f2 42%,#e2e2e2 50%,#ececec 72%,#fbfbfb);box-shadow:0 1px 1px rgba(0,0,0,.12)}
.ck.on{background:linear-gradient(#6e9ef0,#2a68de 48%,#1a5ad6 52%,#6cc4fa 85%,#98e0ff);border-color:#26349a}
.tk{left:-1px;top:-4px;width:16px;height:16px}
.hd{background:linear-gradient(#fff,#f4f4f4 45%,#e6e6e6 50%,#f2f2f2 80%,#fff);border-top:1px solid #6e6e6e;border-bottom:1px solid #9a9a9a}
.thumb{border-radius:7px;background:linear-gradient(90deg,#1848c8 0,#74a8f0 12%,#8abcf4 26%,#3c8cee 34%,#3ea4fa 55%,#58bcff 78%,#2c86ec 92%,#1c5cd0 100%);box-shadow:inset 0 3px 3px -1px #0a2c9a,inset 0 -3px 3px -1px #0a2c9a,0 0 0 1px rgba(40,40,60,.5)}
.track{background:linear-gradient(90deg,#d2d2d2,#f6f6f6 35%,#fff 70%,#ececec);border-left:1px solid #c8c8c8}
</style>
<div class="a" style="left:642px;top:192px;width:309px;height:567px;border:1px solid #8a8a8a;background:#dcdcdc"></div>
<div class="a" style="left:646.500px;top:197px;font-size:11px;line-height:15px;color:#666">By:</div>
<div class="a rad" style="left:668px"><div class="a" style="left:4px;top:4px;width:4px;height:4px;border-radius:50%;background:#555"></div></div><div class="a" style="left:686.5px;top:197px;font-size:11px;line-height:15px;color:#6a6a6a">Name</div>
<div class="a rad" style="left:723.5px"></div><div class="a" style="left:742px;top:197px;font-size:11px;line-height:15px;color:#6a6a6a">Type</div>
<div class="a rad" style="left:775.5px"></div><div class="a" style="left:794px;top:197px;font-size:11px;line-height:15px;color:#6a6a6a">ID</div>
<div class="a rad" style="left:813px"></div><div class="a" style="left:831px;top:197px;font-size:11px;line-height:15px;color:#6a6a6a">Selected</div>
<div class="a hd" style="left:643px;top:217px;width:307px;height:17px"></div>
<div class="a" style="left:889px;top:218px;width:1px;height:15px;background:#a8a8a8"></div>
<div class="a" style="left:644px;top:218px;font-size:11px;line-height:15px;color:#111">Catalogue</div>
<div class="a" style="left:891.500px;top:218px;font-size:11px;line-height:15px;color:#111">Label</div>
<div class="a" style="left:643px;top:234px;width:307px;height:500px;background:#fff;overflow:hidden;border-bottom:1px solid #9a9a9a">
<div class="a" style="left:0;top:0px;width:292px;height:18px;background:#fff;font-size:11px;color:#111"><div class="a ck" style="left:22px;top:2px"></div><div class="a" style="left:41.500px;top:1px;line-height:16px;letter-spacing:-.26px">3rd Cambridge Radio Source</div></div>
<div class="a" style="left:0;top:18px;width:292px;height:18px;background:#efefef;font-size:11px;color:#111"><div class="a ck" style="left:22px;top:2px"></div><div class="a" style="left:41.500px;top:1px;line-height:16px;letter-spacing:-.26px">AAVSO Variable Star Index (VSX)</div></div>
<div class="a" style="left:0;top:36px;width:292px;height:18px;background:#fff;font-size:11px;color:#111"><div class="a ck" style="left:22px;top:2px"></div><div class="a" style="left:41.500px;top:1px;line-height:16px;letter-spacing:-.26px">Abell Galaxy Cluster</div></div>
<div class="a" style="left:0;top:54px;width:292px;height:18px;background:#efefef;font-size:11px;color:#111"><div class="a ck" style="left:22px;top:2px"></div><div class="a" style="left:41.500px;top:1px;line-height:16px;letter-spacing:-.26px">Abell Planetary Nebulae</div></div>
<div class="a" style="left:0;top:72px;width:292px;height:18px;background:#fff;font-size:11px;color:#111"><div class="a ck" style="left:22px;top:2px"></div><div class="a" style="left:41.500px;top:1px;line-height:16px;letter-spacing:-.26px">Aitken's Double Star</div></div>
<div class="a" style="left:0;top:90px;width:292px;height:18px;background:#efefef;font-size:11px;color:#111"><div class="a ck" style="left:22px;top:2px"></div><div class="a" style="left:41.500px;top:1px;line-height:16px;letter-spacing:-.26px">AL Dbl Star</div></div>
<div class="a" style="left:0;top:108px;width:292px;height:18px;background:#fff;font-size:11px;color:#111"><div class="a ck" style="left:22px;top:2px"></div><div class="a" style="left:41.500px;top:1px;line-height:16px;letter-spacing:-.26px">All-Sky Compiled</div></div>
<div class="a" style="left:0;top:126px;width:292px;height:18px;background:#efefef;font-size:11px;color:#111"><div class="a ck" style="left:22px;top:2px"></div><div class="a" style="left:41.500px;top:1px;line-height:16px;letter-spacing:-.26px">Arp Peculiar Galaxy</div></div>
<div class="a" style="left:0;top:144px;width:292px;height:18px;background:#fff;font-size:11px;color:#111"><div class="a ck" style="left:22px;top:2px"></div><div class="a" style="left:41.500px;top:1px;line-height:16px;letter-spacing:-.26px">ASCC Lite</div></div>
<div class="a" style="left:0;top:162px;width:292px;height:18px;background:#efefef;font-size:11px;color:#111"><div class="a ck" style="left:22px;top:2px"></div><div class="a" style="left:41.500px;top:1px;line-height:16px;letter-spacing:-.26px">Barnard Dark Nebulae</div></div>
<div class="a" style="left:0;top:180px;width:292px;height:18px;background:#fff;font-size:11px;color:#111"><div class="a ck" style="left:22px;top:2px"></div><div class="a" style="left:41.500px;top:1px;line-height:16px;letter-spacing:-.26px">Bedford</div></div>
<div class="a" style="left:0;top:198px;width:292px;height:18px;background:#efefef;font-size:11px;color:#111"><div class="a ck" style="left:22px;top:2px"></div><div class="a" style="left:41.500px;top:1px;line-height:16px;letter-spacing:-.26px">Berkeley</div></div>
<div class="a" style="left:0;top:216px;width:292px;height:18px;background:#fff;font-size:11px;color:#111"><div class="a ck" style="left:22px;top:2px"></div><div class="a" style="left:41.500px;top:1px;line-height:16px;letter-spacing:-.26px">Bernes Bright Nebulosity</div></div>
<div class="a" style="left:0;top:234px;width:292px;height:18px;background:#efefef;font-size:11px;color:#111"><div class="a ck" style="left:22px;top:2px"></div><div class="a" style="left:41.500px;top:1px;line-height:16px;letter-spacing:-.26px">Bernes Dark Cloud</div></div>
<div class="a" style="left:0;top:252px;width:292px;height:18px;background:#fff;font-size:11px;color:#111"><div class="a ck" style="left:22px;top:2px"></div><div class="a" style="left:41.500px;top:1px;line-height:16px;letter-spacing:-.26px">Bonner Durchmusterung</div></div>
<div class="a" style="left:0;top:270px;width:292px;height:18px;background:#efefef;font-size:11px;color:#111"><div class="a ck" style="left:22px;top:2px"></div><div class="a" style="left:41.500px;top:1px;line-height:16px;letter-spacing:-.26px">Boss General</div></div>
<div class="a" style="left:0;top:288px;width:292px;height:18px;background:#fff;font-size:11px;color:#111"><div class="a ck on" style="left:22px;top:2px"><svg class="a tk" viewBox="0 0 16 16"><path d="M2.700 7.800L6.700 12.300C8.300 8 10.800 4.500 14.300 1.200" fill="none" stroke="#0a0a0a" stroke-width="1.900" stroke-linejoin="round"/></svg></div><div class="a" style="left:41.500px;top:1px;line-height:16px;letter-spacing:-.26px">Bright Star</div><div class="a" style="left:248.500px;top:1px;line-height:16px">Yes</div></div>
<div class="a" style="left:0;top:306px;width:292px;height:18px;background:#efefef;font-size:11px;color:#111"><div class="a ck" style="left:22px;top:2px"></div><div class="a" style="left:41.500px;top:1px;line-height:16px;letter-spacing:-.26px">Burnham Double Star</div></div>
<div class="a" style="left:0;top:324px;width:292px;height:18px;background:#fff;font-size:11px;color:#111"><div class="a ck" style="left:22px;top:2px"></div><div class="a" style="left:41.500px;top:1px;line-height:16px;letter-spacing:-.26px">Caldwell</div></div>
<div class="a" style="left:0;top:342px;width:292px;height:18px;background:#efefef;font-size:11px;color:#111"><div class="a ck" style="left:22px;top:2px"></div><div class="a" style="left:41.500px;top:1px;line-height:16px;letter-spacing:-.26px">Cape Photographic Durchmusterung</div></div>
<div class="a" style="left:0;top:360px;width:292px;height:18px;background:#fff;font-size:11px;color:#111"><div class="a ck" style="left:22px;top:2px"></div><div class="a" style="left:41.500px;top:1px;line-height:16px;letter-spacing:-.26px">Carbon Star</div></div>
<div class="a" style="left:0;top:378px;width:292px;height:18px;background:#efefef;font-size:11px;color:#111"><div class="a ck" style="left:22px;top:2px"></div><div class="a" style="left:41.500px;top:1px;line-height:16px;letter-spacing:-.26px">Galactic Planetary Nebulae</div></div>
<div class="a" style="left:0;top:396px;width:292px;height:18px;background:#fff;font-size:11px;color:#111"><div class="a ck" style="left:22px;top:2px"></div><div class="a" style="left:41.500px;top:1px;line-height:16px;letter-spacing:-.26px">Isolated Galaxies</div></div>
<div class="a" style="left:0;top:414px;width:292px;height:18px;background:#efefef;font-size:11px;color:#111"><div class="a ck" style="left:22px;top:2px"></div><div class="a" style="left:41.500px;top:1px;line-height:16px;letter-spacing:-.26px">Cederblad Diffuse Nebula</div></div>
<div class="a" style="left:0;top:432px;width:292px;height:18px;background:#fff;font-size:11px;color:#111"><div class="a ck" style="left:22px;top:2px"></div><div class="a" style="left:41.500px;top:1px;line-height:16px;letter-spacing:-.26px">Chandra VGuide</div></div>
<div class="a" style="left:0;top:450px;width:292px;height:18px;background:#efefef;font-size:11px;color:#111"><div class="a ck" style="left:22px;top:2px"></div><div class="a" style="left:41.500px;top:1px;line-height:16px;letter-spacing:-.26px">Clark Deep Sky</div></div>
<div class="a" style="left:0;top:468px;width:292px;height:18px;background:#fff;font-size:11px;color:#111"><div class="a ck" style="left:22px;top:2px"></div><div class="a" style="left:41.500px;top:1px;line-height:16px;letter-spacing:-.26px">Collinder</div></div>
<div class="a" style="left:0;top:486px;width:292px;height:18px;background:#efefef;font-size:11px;color:#111"><div class="a ck" style="left:22px;top:2px"></div><div class="a" style="left:41.500px;top:1px;line-height:16px;letter-spacing:-.26px">Common Proper Motion</div></div>
<div class="a track" style="left:292px;top:0;width:15px;height:500px"></div>
<div class="a thumb" style="left:293px;top:7px;width:12.800px;height:92px"></div>
<div class="a" style="left:292px;top:453px;width:15px;height:14px;border-radius:0 0 7px 7px;border:1px solid #b8b8b8;border-top:none;background:transparent"></div>
<div class="a" style="left:292px;top:467px;width:15px;height:33px;background:linear-gradient(90deg,#e4e4e4,#fff 50%,#e8e8e8)"></div>
<svg class="a" style="left:295px;top:470px" width="9" height="28" viewBox="0 0 9 28"><path d="M4.500 1l3.500 6.500h-7zM4.500 26l3.500-6.500h-7z" fill="#333"/><path d="M0 13.500h9" stroke="#c4c4c4"/></svg>
</div>
<style>
.sp{height:17.800px;border:1px solid #a4a4a4;border-radius:4.500px;background:linear-gradient(#fcfcfc,#ededed 50%,#e0e0e0 51%,#eee);box-shadow:0 1px 0 rgba(0,0,0,.12);font-size:11px;line-height:16px;padding-left:6px;color:#555}
.sp:after{content:"";position:absolute;right:16px;top:1px;bottom:1px;border-left:1px solid #d2d2d2}
.pill{height:20px;border:1px solid #9c9c9c;border-radius:10px;background:linear-gradient(#fdfdfd,#ededed 50%,#e2e2e2 51%,#efefef);box-shadow:0 1px 0 rgba(0,0,0,.12);font-size:11px;line-height:18px;text-align:center;color:#4c4c4c}
.gl{font-family:"DejaVu Sans Condensed","DejaVu Sans",sans-serif;font-stretch:condensed;letter-spacing:.08px;font-size:11px;line-height:12px;color:#333;background:#e9e9e9;padding:0 4px;height:12px}
.gb{border:1px solid #c4c4c4;border-radius:4px;background:#d9d9d9}
.trk{height:5px;border-radius:3px;background:linear-gradient(#a0a0a0,#c4c4c4);border:1px solid #9a9a9a;border-bottom-color:#c0c0c0}
.t12{font-size:11px;letter-spacing:-.32px;line-height:14px;color:#333}
.dl{border-left:1px dotted #333}
.dh{border-top:1px dotted #333}
</style>
<div class="a" style="left:962px;top:176.5px;font-size:11px;line-height:14px;color:#444">Field Diameter:</div>
<div class="a" style="left:1120px;top:176.5px;font-size:11px;line-height:14px;color:#444">Telescope:</div>
<div class="a sp" style="left:961px;top:192px;width:80px">Size:<svg class="a" style="right:4.500px;top:2.500px" width="7" height="11" viewBox="0 0 7 11"><path d="M3.500 0L6.200 4H.800zM3.500 11L6.200 7H.800z" fill="#5a5a5a"/></svg></div>
<div class="a fld" style="left:1047.500px;top:192.500px;width:66px;height:21.500px;line-height:19px;color:#666;padding-left:4px">2.333°</div>
<div class="a sp" style="left:1119.500px;top:192px;width:127.500px">Celestron C6 R...<svg class="a" style="right:4.500px;top:2.500px" width="7" height="11" viewBox="0 0 7 11"><path d="M3.500 0L6.200 4H.800zM3.500 11L6.200 7H.800z" fill="#5a5a5a"/></svg></div>
<div class="a sqb" style="left:1250px;top:192.2px;width:20px;height:20px"><svg class="a" style="left:-1px;top:-1px" width="20" height="20" viewBox="0 0 20 20"><path d="M4 15.600L5.300 11.400L12.900 3.800a1.700 1.700 0 0 1 2.400 0l1 1a1.700 1.700 0 0 1 0 2.400L8.700 14.700z" fill="#f6f6f6" stroke="#9c9c9c" stroke-width=".8"/><path d="M11.300 5.400l3.300 3.300 1.700-1.700-3.300-3.300z" fill="#ababab"/><path d="M4 15.600L8.700 14.700L16.600 6.900" stroke="#3c3c3c" stroke-width="1.300" fill="none" stroke-linejoin="round"/><path d="M4 15.600l1.700-.300-1.200-1.300z" fill="#333"/></svg></div>
<div class="a" style="left:961.5px;top:217px;font-size:11px;line-height:14px;color:#444">Eyepiece/Imager:</div>
<div class="a" style="left:1120px;top:217px;font-size:11px;line-height:14px;color:#444">Optical Aid:</div>
<div class="a sp" style="left:961px;top:231px;width:130px">Russell Optics S...<svg class="a" style="right:4.500px;top:2.500px" width="7" height="11" viewBox="0 0 7 11"><path d="M3.500 0L6.200 4H.800zM3.500 11L6.200 7H.800z" fill="#5a5a5a"/></svg></div>
<div class="a sqb" style="left:1094px;top:231px;width:20px;height:20px"><svg class="a" style="left:-1px;top:-1px" width="20" height="20" viewBox="0 0 20 20"><path d="M4 15.600L5.300 11.400L12.900 3.800a1.700 1.700 0 0 1 2.400 0l1 1a1.700 1.700 0 0 1 0 2.400L8.700 14.700z" fill="#f6f6f6" stroke="#9c9c9c" stroke-width=".8"/><path d="M11.300 5.400l3.300 3.300 1.700-1.700-3.300-3.300z" fill="#ababab"/><path d="M4 15.600L8.700 14.700L16.600 6.900" stroke="#3c3c3c" stroke-width="1.300" fill="none" stroke-linejoin="round"/><path d="M4 15.600l1.700-.300-1.200-1.300z" fill="#333"/></svg></div>
<div class="a sp" style="left:1119.500px;top:231px;width:127.500px">WO CF Dielectri...<svg class="a" style="right:4.500px;top:2.500px" width="7" height="11" viewBox="0 0 7 11"><path d="M3.500 0L6.200 4H.800zM3.500 11L6.200 7H.800z" fill="#5a5a5a"/></svg></div>
<div class="a sqb" style="left:1250px;top:231px;width:20px;height:20px"><svg class="a" style="left:-1px;top:-1px" width="20" height="20" viewBox="0 0 20 20"><path d="M4 15.600L5.300 11.400L12.900 3.800a1.700 1.700 0 0 1 2.400 0l1 1a1.700 1.700 0 0 1 0 2.400L8.700 14.700z" fill="#f6f6f6" stroke="#9c9c9c" stroke-width=".8"/><path d="M11.300 5.400l3.300 3.300 1.700-1.700-3.300-3.300z" fill="#ababab"/><path d="M4 15.600L8.700 14.700L16.600 6.900" stroke="#3c3c3c" stroke-width="1.300" fill="none" stroke-linejoin="round"/><path d="M4 15.600l1.700-.300-1.200-1.300z" fill="#333"/></svg></div>
<div class="a pill" style="left:961px;top:259.300px;width:87px">Spiral Scan...</div>
<div class="a pill" style="left:1062.500px;top:259.500px;width:60px">Images</div>
<div class="a pill" style="left:1137px;top:259.500px;width:73px">Get Scope</div>
<div class="a ck" style="left:1220px;top:262px"></div>
<div class="a" style="left:1238px;top:262px;font-size:11px;line-height:14px;color:#444">Auto</div>
<div class="a gb" style="left:961px;top:297px;width:309px;height:78px"></div>
<div class="a gl" style="left:967.500px;top:284.500px">Magnitude Limits</div>
<div class="a t12" style="left:968px;top:300.5px">Stars</div><div class="a t12 r" style="left:1025px;width:60px;top:300.5px">11.8</div><div class="a trk" style="left:967.5px;top:319.0px;width:118.0px"></div><svg class="a" style="left:1011.7px;top:314.0px" width="15" height="19" viewBox="0 0 15 19"><defs><linearGradient id="tg1" x1="0" y1="0" x2="0" y2="1"><stop offset="0" stop-color="#fdfdfd"/><stop offset="1" stop-color="#c8c8c8"/></linearGradient></defs><path d="M2.500 .500h10a2 2 0 0 1 2 2v8.500l-7 7-7-7V2.500a2 2 0 0 1 2-2z" fill="url(#tg1)" stroke="#6e6e6e" stroke-width="1"/></svg><div class="a stp" style="left:1093px;top:310.0px;width:13px;height:21px"><svg class="a" style="left:2px;top:2px" width="7" height="15" viewBox="0 0 7 15"><path d="M3.500 .500L6.500 4.500H.500zM3.500 14.500L6.500 10.500H.500z" fill="#8e8e8e"/></svg></div>
<div class="a t12" style="left:1123.5px;top:300.5px">DSOs</div><div class="a t12 r" style="left:1180px;width:60px;top:300.5px">11.8</div><div class="a trk" style="left:1122.5px;top:319.0px;width:118.0px"></div><svg class="a" style="left:1166.5px;top:314.0px" width="15" height="19" viewBox="0 0 15 19"><defs><linearGradient id="tg2" x1="0" y1="0" x2="0" y2="1"><stop offset="0" stop-color="#fdfdfd"/><stop offset="1" stop-color="#c8c8c8"/></linearGradient></defs><path d="M2.500 .500h10a2 2 0 0 1 2 2v8.500l-7 7-7-7V2.500a2 2 0 0 1 2-2z" fill="url(#tg2)" stroke="#6e6e6e" stroke-width="1"/></svg><div class="a stp" style="left:1248.5px;top:310.0px;width:13px;height:21px"><svg class="a" style="left:2px;top:2px" width="7" height="15" viewBox="0 0 7 15"><path d="M3.500 .500L6.500 4.500H.500zM3.500 14.500L6.500 10.500H.500z" fill="#8e8e8e"/></svg></div>
<div class="a t12" style="left:968px;top:337.5px">Star labels</div><div class="a t12 r" style="left:1025px;width:60px;top:337.5px">5.0</div><div class="a trk" style="left:967.5px;top:356.0px;width:118.0px"></div><svg class="a" style="left:991.0px;top:351.0px" width="15" height="19" viewBox="0 0 15 19"><defs><linearGradient id="tg3" x1="0" y1="0" x2="0" y2="1"><stop offset="0" stop-color="#fdfdfd"/><stop offset="1" stop-color="#c8c8c8"/></linearGradient></defs><path d="M2.500 .500h10a2 2 0 0 1 2 2v8.500l-7 7-7-7V2.500a2 2 0 0 1 2-2z" fill="url(#tg3)" stroke="#6e6e6e" stroke-width="1"/></svg><div class="a stp" style="left:1093px;top:347.0px;width:13px;height:21px"><svg class="a" style="left:2px;top:2px" width="7" height="15" viewBox="0 0 7 15"><path d="M3.500 .500L6.500 4.500H.500zM3.500 14.500L6.500 10.500H.500z" fill="#8e8e8e"/></svg></div>
<div class="a t12" style="left:1123.5px;top:337.5px">DSO labels</div><div class="a t12 r" style="left:1180px;width:60px;top:337.5px">15.0</div><div class="a trk" style="left:1122.5px;top:356.0px;width:118.0px"></div><svg class="a" style="left:1176.5px;top:351.0px" width="15" height="19" viewBox="0 0 15 19"><defs><linearGradient id="tg4" x1="0" y1="0" x2="0" y2="1"><stop offset="0" stop-color="#fdfdfd"/><stop offset="1" stop-color="#c8c8c8"/></linearGradient></defs><path d="M2.500 .500h10a2 2 0 0 1 2 2v8.500l-7 7-7-7V2.500a2 2 0 0 1 2-2z" fill="url(#tg4)" stroke="#6e6e6e" stroke-width="1"/></svg><div class="a stp" style="left:1248.5px;top:347.0px;width:13px;height:21px"><svg class="a" style="left:2px;top:2px" width="7" height="15" viewBox="0 0 7 15"><path d="M3.500 .500L6.500 4.500H.500zM3.500 14.500L6.500 10.500H.500z" fill="#8e8e8e"/></svg></div>
<div class="a gb" style="left:961px;top:390.500px;width:149.500px;height:36px"></div>
<div class="a gl" style="left:967.500px;top:378.500px">FoV Rotation</div>
<div class="a gb" style="left:1118px;top:390.500px;width:150px;height:36px"></div>
<div class="a gl" style="left:1124.500px;top:378.500px">Reticle Rotation</div>
<div class="a trk" style="left:966.5px;top:406.500px;width:87.5px"></div><svg class="a" style="left:966.3px;top:401.5px" width="15" height="19" viewBox="0 0 15 19"><defs><linearGradient id="tg5" x1="0" y1="0" x2="0" y2="1"><stop offset="0" stop-color="#fdfdfd"/><stop offset="1" stop-color="#c8c8c8"/></linearGradient></defs><path d="M2.500 .500h10a2 2 0 0 1 2 2v8.500l-7 7-7-7V2.500a2 2 0 0 1 2-2z" fill="url(#tg5)" stroke="#6e6e6e" stroke-width="1"/></svg><div class="a fld" style="left:1063px;top:399.500px;width:28.500px;height:21px;line-height:18px;color:#666;padding-left:3.500px">0</div><div class="a" style="left:1100px;top:401px;font-size:11px;color:#444">°</div>
<div class="a trk" style="left:1123.5px;top:406.500px;width:87.5px"></div><svg class="a" style="left:1123.3px;top:401.5px" width="15" height="19" viewBox="0 0 15 19"><defs><linearGradient id="tg6" x1="0" y1="0" x2="0" y2="1"><stop offset="0" stop-color="#fdfdfd"/><stop offset="1" stop-color="#c8c8c8"/></linearGradient></defs><path d="M2.500 .500h10a2 2 0 0 1 2 2v8.500l-7 7-7-7V2.500a2 2 0 0 1 2-2z" fill="url(#tg6)" stroke="#6e6e6e" stroke-width="1"/></svg><div class="a fld" style="left:1220.5px;top:399.500px;width:28.500px;height:21px;line-height:18px;color:#666;padding-left:3.500px">0</div><div class="a" style="left:1256.5px;top:401px;font-size:11px;color:#444">°</div>
<div class="a" style="left:961px;top:431.5px;font-size:11px;line-height:14px;color:#444">Display Options</div>
<div class="a" style="left:961px;top:446px;width:309px;height:312.500px;border:1px solid #8a8a8a;background:#fff;overflow:hidden">
<div class="a" style="left:0;top:0px;width:293px;height:18px;background:#fff;font-size:11px;color:#111"><svg class="a" style="left:5px;top:5px" width="10" height="9" viewBox="0 0 10 9"><path d="M.500 .500h9l-4.500 8z" fill="#777"/></svg><div class="a dh" style="left:15px;top:9px;width:7px;height:1px"></div><div class="a ck on" style="left:21.7px;top:2px"><svg class="a tk" viewBox="0 0 16 16"><path d="M2.700 7.800L6.700 12.300C8.300 8 10.800 4.500 14.300 1.200" fill="none" stroke="#0a0a0a" stroke-width="1.900" stroke-linejoin="round"/></svg></div><div class="a" style="left:41.2px;top:1px;line-height:16px">Constellations</div></div>
<div class="a" style="left:0;top:18px;width:293px;height:18px;background:#efefef;font-size:11px;color:#111"><div class="a dh" style="left:27.500px;top:9px;width:12px;height:1px"></div><div class="a ck" style="left:39.7px;top:2px"></div><div class="a" style="left:58.7px;top:1px;line-height:16px">Borders</div></div>
<div class="a" style="left:0;top:36px;width:293px;height:18px;background:#fff;font-size:11px;color:#111"><div class="a dh" style="left:27.500px;top:9px;width:12px;height:1px"></div><div class="a ck on" style="left:39.7px;top:2px"><svg class="a tk" viewBox="0 0 16 16"><path d="M2.700 7.800L6.700 12.300C8.300 8 10.800 4.500 14.300 1.200" fill="none" stroke="#0a0a0a" stroke-width="1.900" stroke-linejoin="round"/></svg></div><div class="a" style="left:58.7px;top:1px;line-height:16px">Colour constellation stars</div></div>
<div class="a" style="left:0;top:54px;width:293px;height:18px;background:#efefef;font-size:11px;color:#111"><div class="a dh" style="left:27.500px;top:9px;width:12px;height:1px"></div><div class="a ck" style="left:39.7px;top:2px"></div><div class="a" style="left:58.7px;top:1px;line-height:16px">Figures</div></div>
<div class="a" style="left:0;top:72px;width:293px;height:18px;background:#fff;font-size:11px;color:#111"><div class="a dh" style="left:27.500px;top:9px;width:12px;height:1px"></div><div class="a ck" style="left:39.7px;top:2px"></div><div class="a" style="left:58.7px;top:1px;line-height:16px">Names</div></div>
<div class="a" style="left:0;top:90px;width:293px;height:18px;background:#efefef;font-size:11px;color:#111"><svg class="a" style="left:5px;top:5px" width="10" height="9" viewBox="0 0 10 9"><path d="M.500 .500h9l-4.500 8z" fill="#777"/></svg><div class="a dh" style="left:15px;top:9px;width:7px;height:1px"></div><div class="a ck on" style="left:21.7px;top:2px"><svg class="a tk" viewBox="0 0 16 16"><path d="M2.700 7.800L6.700 12.300C8.300 8 10.800 4.500 14.300 1.200" fill="none" stroke="#0a0a0a" stroke-width="1.900" stroke-linejoin="round"/></svg></div><div class="a" style="left:41.2px;top:1px;line-height:16px">Display</div></div>
<div class="a" style="left:0;top:108px;width:293px;height:18px;background:#fff;font-size:11px;color:#111"><div class="a dh" style="left:27.500px;top:9px;width:12px;height:1px"></div><div class="a ck on" style="left:39.7px;top:2px"><svg class="a tk" viewBox="0 0 16 16"><path d="M2.700 7.800L6.700 12.300C8.300 8 10.800 4.500 14.300 1.200" fill="none" stroke="#0a0a0a" stroke-width="1.900" stroke-linejoin="round"/></svg></div><div class="a" style="left:58.7px;top:1px;line-height:16px">Aperture</div></div>
<div class="a" style="left:0;top:126px;width:293px;height:18px;background:#efefef;font-size:11px;color:#111"><div class="a dh" style="left:27.500px;top:9px;width:12px;height:1px"></div><div class="a ck on" style="left:39.7px;top:2px"><svg class="a tk" viewBox="0 0 16 16"><path d="M2.700 7.800L6.700 12.300C8.300 8 10.800 4.500 14.300 1.200" fill="none" stroke="#0a0a0a" stroke-width="1.900" stroke-linejoin="round"/></svg></div><div class="a" style="left:58.7px;top:1px;line-height:16px">Cardinal points</div></div>
<div class="a" style="left:0;top:144px;width:293px;height:18px;background:#fff;font-size:11px;color:#111"><div class="a dh" style="left:27.500px;top:9px;width:12px;height:1px"></div><div class="a ck on" style="left:39.7px;top:2px"><svg class="a tk" viewBox="0 0 16 16"><path d="M2.700 7.800L6.700 12.300C8.300 8 10.800 4.500 14.300 1.200" fill="none" stroke="#0a0a0a" stroke-width="1.900" stroke-linejoin="round"/></svg></div><div class="a" style="left:58.7px;top:1px;line-height:16px">Cross hairs</div></div>
<div class="a" style="left:0;top:162px;width:293px;height:18px;background:#efefef;font-size:11px;color:#111"><div class="a dh" style="left:27.500px;top:9px;width:12px;height:1px"></div><div class="a ck on" style="left:39.7px;top:2px"><svg class="a tk" viewBox="0 0 16 16"><path d="M2.700 7.800L6.700 12.300C8.300 8 10.800 4.500 14.300 1.200" fill="none" stroke="#0a0a0a" stroke-width="1.900" stroke-linejoin="round"/></svg></div><div class="a" style="left:58.7px;top:1px;line-height:16px">Current telescope position</div></div>
<div class="a" style="left:0;top:180px;width:293px;height:18px;background:#fff;font-size:11px;color:#111"><div class="a dh" style="left:27.500px;top:9px;width:12px;height:1px"></div><div class="a ck" style="left:39.7px;top:2px"></div><div class="a" style="left:58.7px;top:1px;line-height:16px">Highlighted plan objects only</div></div>
<div class="a" style="left:0;top:198px;width:293px;height:18px;background:#efefef;font-size:11px;color:#111"><div class="a dh" style="left:27.500px;top:9px;width:12px;height:1px"></div><div class="a ck on" style="left:39.7px;top:2px"><svg class="a tk" viewBox="0 0 16 16"><path d="M2.700 7.800L6.700 12.300C8.300 8 10.800 4.500 14.300 1.200" fill="none" stroke="#0a0a0a" stroke-width="1.900" stroke-linejoin="round"/></svg></div><div class="a" style="left:58.7px;top:1px;line-height:16px">Images</div></div>
<div class="a" style="left:0;top:216px;width:293px;height:18px;background:#fff;font-size:11px;color:#111"><div class="a dh" style="left:27.500px;top:9px;width:12px;height:1px"></div><div class="a ck" style="left:39.7px;top:2px"></div><div class="a" style="left:58.7px;top:1px;line-height:16px">Multiple stars</div></div>
<div class="a" style="left:0;top:234px;width:293px;height:18px;background:#efefef;font-size:11px;color:#111"><div class="a dh" style="left:27.500px;top:9px;width:12px;height:1px"></div><div class="a ck" style="left:39.7px;top:2px"></div><div class="a" style="left:58.7px;top:1px;line-height:16px">Number of observations</div></div>
<div class="a" style="left:0;top:252px;width:293px;height:18px;background:#fff;font-size:11px;color:#111"><div class="a dh" style="left:27.500px;top:9px;width:12px;height:1px"></div><div class="a ck" style="left:39.7px;top:2px"></div><div class="a" style="left:58.7px;top:1px;line-height:16px">Objects with magnitude only</div></div>
<div class="a" style="left:0;top:270px;width:293px;height:18px;background:#efefef;font-size:11px;color:#111"><div class="a dh" style="left:27.500px;top:9px;width:12px;height:1px"></div><div class="a ck" style="left:39.7px;top:2px"></div><div class="a" style="left:58.7px;top:1px;line-height:16px">Plan object at chart centre only</div></div>
<div class="a" style="left:0;top:288px;width:293px;height:18px;background:#fff;font-size:11px;color:#111"><div class="a dh" style="left:27.500px;top:9px;width:12px;height:1px"></div><div class="a ck" style="left:39.7px;top:2px"></div><div class="a" style="left:58.7px;top:1px;line-height:16px">Proper motion</div></div>
<div class="a" style="left:0;top:306px;width:293px;height:18px;background:#efefef;font-size:11px;color:#111"><div class="a dh" style="left:27.500px;top:9px;width:12px;height:1px"></div><div class="a ck" style="left:39.7px;top:2px"></div><div class="a" style="left:58.7px;top:1px;line-height:16px">Show constellation boundaries</div></div>
<div class="a dl" style="left:27.500px;top:17px;width:1px;height:65px"></div>
<div class="a dl" style="left:27.500px;top:107px;width:1px;height:215px"></div>
<div class="a track" style="left:293px;top:0;width:15px;height:312px"></div>
<div class="a thumb" style="left:294px;top:6.500px;width:12.800px;height:85px"></div>
<div class="a" style="left:293px;top:264px;width:15px;height:14px;border-radius:0 0 7px 7px;border:1px solid #b8b8b8;border-top:none"></div>
<div class="a" style="left:293px;top:278px;width:15px;height:34px;background:linear-gradient(90deg,#e4e4e4,#fff 50%,#e8e8e8)"></div>
<svg class="a" style="left:296px;top:281px" width="9" height="28" viewBox="0 0 9 28"><path d="M4.500 1.500l3.500 6.500h-7zM4.500 26l3.500-6.500h-7z" fill="#333"/><path d="M0 13.500h9" stroke="#c4c4c4"/></svg>
</div>
<svg class="a" style="left:1265px;top:759px" width="15" height="15" viewBox="0 0 15 15"><rect width="15" height="15" fill="#f4f4f4"/><path d="M14 2L2 14M14 6L6 14M14 10L10 14" stroke="#7a7a7a" stroke-width="1"/><path d="M14 3L3 14M14 7L7 14M14 11L11 14" stroke="#fff" stroke-width="1"/></svg>
</body></html>
